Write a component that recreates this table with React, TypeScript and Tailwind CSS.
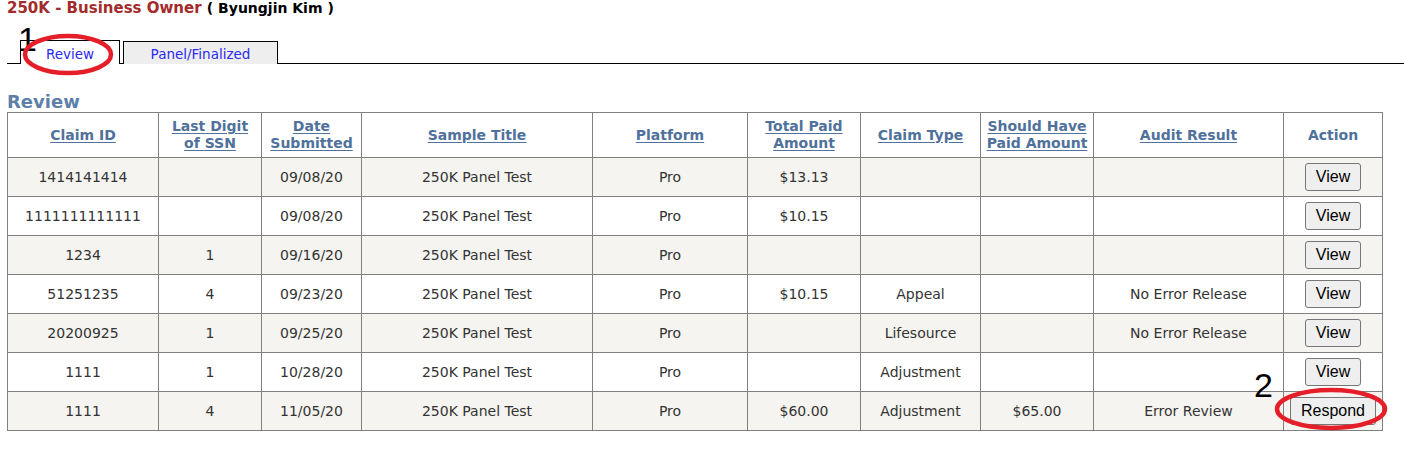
import React from "react";

const headers: { label: React.ReactNode; link: boolean }[] = [
  { label: "Claim ID", link: true },
  { label: <>Last Digit<br />of SSN</>, link: true },
  { label: <>Date<br />Submitted</>, link: true },
  { label: "Sample Title", link: true },
  { label: "Platform", link: true },
  { label: <>Total Paid<br />Amount</>, link: true },
  { label: "Claim Type", link: true },
  { label: <>Should Have<br />Paid Amount</>, link: true },
  { label: "Audit Result", link: true },
  { label: "Action", link: false },
];

const widths = [151, 103, 100, 231, 155, 113, 120, 113, 190, 99];

const rows: string[][] = [
  ["1414141414", "", "09/08/20", "250K Panel Test", "Pro", "$13.13", "", "", "", "View"],
  ["1111111111111", "", "09/08/20", "250K Panel Test", "Pro", "$10.15", "", "", "", "View"],
  ["1234", "1", "09/16/20", "250K Panel Test", "Pro", "", "", "", "", "View"],
  ["51251235", "4", "09/23/20", "250K Panel Test", "Pro", "$10.15", "Appeal", "", "No Error Release", "View"],
  ["20200925", "1", "09/25/20", "250K Panel Test", "Pro", "", "Lifesource", "", "No Error Release", "View"],
  ["1111", "1", "10/28/20", "250K Panel Test", "Pro", "", "Adjustment", "", "", "View"],
  ["1111", "4", "11/05/20", "250K Panel Test", "Pro", "$60.00", "Adjustment", "$65.00", "Error Review", "Respond"],
];

export default function App() {
  return (
    <div className="relative w-[1404px] h-[454px] bg-white overflow-hidden font-['DejaVu_Sans',sans-serif]">
      <div className="pl-[7px]">
        <div className="text-[15px] leading-[16px] font-bold text-[#a32b2b] whitespace-nowrap">
          250K - Business Owner{" "}
          <span className="text-[14px] text-black">( Byungjin Kim )</span>
        </div>

        <div className="mt-[24px] flex items-end border-b border-black h-[24px]">
          <div className="ml-[13px] -mb-px w-[100px] h-[24px] pt-[2px] bg-white border border-b-0 border-black flex items-center justify-center text-[13.5px] leading-[20px] text-[#2a2aee]">
            Review
          </div>
          <div className="ml-[3px] -mb-px w-[155px] h-[23px] pt-[2px] bg-[#eeeeee] border border-b-0 border-black flex items-center justify-center text-[13.5px] leading-[20px] text-[#2a2aee]">
            Panel/Finalized
          </div>
        </div>

        <div className="mt-[27px] text-[18px] leading-[21px] font-bold text-[#5d7fa8]">Review</div>

        <table className="table-fixed border-collapse w-[1375px] text-[14px] leading-[17px] text-[#333333]">
          <colgroup>
            {widths.map((w, i) => (
              <col key={i} style={{ width: w }} />
            ))}
          </colgroup>
          <thead>
            <tr className="h-[45px]">
              {headers.map((h, i) => (
                <th
                  key={i}
                  className={
                    "border border-[#808080] px-1 text-center align-middle font-bold text-[#4f719b] " +
                    (h.link ? "underline underline-offset-2" : "")
                  }
                >
                  {h.label}
                </th>
              ))}
            </tr>
          </thead>
          <tbody>
            {rows.map((r, ri) => (
              <tr key={ri} className={"h-[39px] " + (ri % 2 === 0 ? "bg-[#f5f4f0]" : "bg-white")}>
                {r.map((c, ci) =>
                  ci === 9 ? (
                    <td key={ci} className="border border-[#808080] text-center align-middle">
                      <button className="h-[28px] px-[10px] bg-[#efefef] border border-[#767676] rounded-[3px] font-['Liberation_Sans',Arial,sans-serif] text-[16px] leading-[18px] text-black">
                        {c}
                      </button>
                    </td>
                  ) : (
                    <td key={ci} className="border border-[#808080] px-1 text-center align-middle">
                      {c}
                    </td>
                  )
                )}
              </tr>
            ))}
          </tbody>
        </table>
      </div>

      {/* annotations */}
      <div className="absolute left-[18px] top-[22px] font-['Liberation_Sans',Arial,sans-serif] text-[34px] leading-[34px] text-black">1</div>
      <div className="absolute left-[1254px] top-[368px] font-['Liberation_Sans',Arial,sans-serif] text-[34px] leading-[34px] text-black">2</div>
      <svg className="absolute inset-0 pointer-events-none" width={1404} height={454}>
        <ellipse cx={68} cy={54.5} rx={43} ry={18.5} fill="none" stroke="#e51f2a" strokeWidth={4.5} />
        <ellipse cx={1331} cy={409} rx={54} ry={19} fill="none" stroke="#e51f2a" strokeWidth={4.5} />
      </svg>
    </div>
  );
}
